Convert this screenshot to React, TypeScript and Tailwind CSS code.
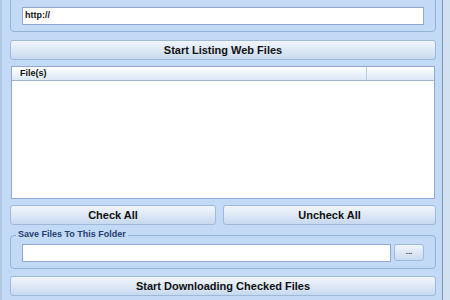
import React from 'react'

const Btn = ({ label, className = '' }: { label: string; className?: string }) => (
  <div
    className={`h-[20px] flex items-center justify-center rounded-[3px] border border-[#9fb9da] bg-gradient-to-b from-[#f1f6fc] via-[#dde8f6] to-[#c7d9ef] text-[11px] font-bold text-[#111] ${className}`}
  >
    {label}
  </div>
)

const App = () => {
  return (
    <div className="w-[450px] h-[300px] overflow-hidden flex bg-[#c3daf6] font-['Liberation_Sans',Arial,sans-serif]">
      {/* left edge */}
      <div className="w-[2px] bg-[#afc8e6]"></div>

      <div className="flex-1 pl-[8px] pr-[6px] flex flex-col">
        {/* Web Site group */}
        <div className="relative -mt-[6px] h-[38px] border border-[#93b2da] rounded-[4px] px-[11px] pt-[12px]">
          <span className="absolute left-[5px] -top-[6px] px-[2px] bg-[#c3daf6] text-[9px] font-bold text-[#1f3d6e] leading-none">
            Web Site
          </span>
          <div className="h-[18px] bg-white border border-[#8ea9cd] flex items-center pl-[2px] text-[9px] font-bold text-[#111]">
            http://
          </div>
        </div>

        <Btn label="Start Listing Web Files" className="mt-[8px]" />

        {/* Files list */}
        <div className="mt-[6px] mx-[1px] h-[133px] bg-white border border-[#8eaad0] flex flex-col">
          <div className="h-[14px] flex border-b border-[#9db6d6] bg-gradient-to-b from-white to-[#dce8f7] text-[9px] font-bold text-[#111]">
            <div className="flex-1 flex items-center pl-[8px] border-r border-[#b7c9df]">File(s)</div>
            <div className="w-[67px]"></div>
          </div>
        </div>

        <div className="mt-[6px] flex gap-[7px]">
          <Btn label="Check All" className="w-[206px]" />
          <Btn label="Uncheck All" className="flex-1" />
        </div>

        {/* Save folder group */}
        <div className="relative mt-[10px] h-[34px] border border-[#93b2da] rounded-[4px] pl-[11px] pr-[11px] pt-[8px] flex gap-[3px]">
          <span className="absolute left-[5px] -top-[6px] px-[2px] bg-[#c3daf6] text-[9px] font-bold text-[#1f3d6e] leading-none">
            Save Files To This Folder
          </span>
          <div className="flex-1 h-[18px] bg-white border border-[#8ea9cd]"></div>
          <div className="w-[30px] h-[17px] rounded-[3px] border border-[#9fb9da] bg-gradient-to-b from-[#f1f6fc] to-[#c9daef] flex items-center justify-center text-[8px] font-bold text-[#333] leading-none pb-[2px]">
            ...
          </div>
        </div>

        <Btn label="Start Downloading Checked Files" className="mt-[7px]" />
      </div>

      {/* right window border */}
      <div className="w-px bg-[#8294ab]"></div>
      <div className="w-[7px] bg-[#d2e1f2]"></div>
    </div>
  )
}

export default App
